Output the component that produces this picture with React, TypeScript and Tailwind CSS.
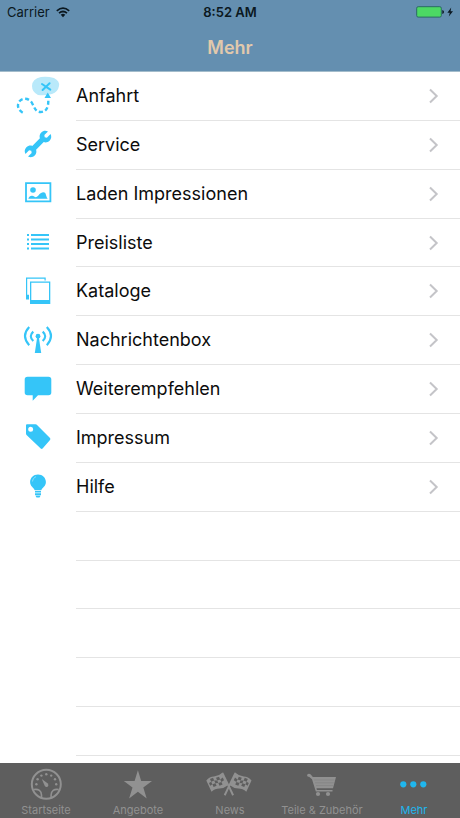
import type { ReactNode } from "react";

const menuItems = [
  {
    title: "Anfahrt",
    icon: (
      <>
        <path
          d="M27 5 Q33 4 40 6 Q46 9 45 14 Q44 20 38 22 Q31 24 24 23 Q18 20 18 14 Q18 7 27 5Z"
          fill="#b9e9fa"
        />
        <path
          d="M28 12 L36.3 17.6 M35.6 11.2 L28.6 18"
          stroke="currentColor"
          strokeWidth="2"
          fill="none"
          strokeLinecap="round"
        />
        <path d="M33.7 20.5 L37 26 H30.5Z" />
        <path
          d="M8.7 40.7 C4 38 2.5 33 5.5 29.3 C9 25.5 15 26 18 31 C20.5 35.5 21.5 40 26.7 40 C32 40 34.5 36 34.3 28"
          stroke="currentColor"
          strokeWidth="2.4"
          fill="none"
          strokeDasharray="4 2.6"
        />
      </>
    ),
  },
  {
    title: "Service",
    icon: (
      <g transform="rotate(45 24 23) translate(2.4 2.3) scale(0.9)">
        <path d="M22 5.3 V11 L24 12.5 L26 11 V5.3 C29 6.2 30.5 8.7 30.5 11.3 C30.5 14 29 16 27 17 V29 C29 30 30.5 32 30.5 34.7 C30.5 37.3 29 39.8 26 40.7 V35 L24 33.5 L22 35 V40.7 C19 39.8 17.5 37.3 17.5 34.7 C17.5 32 19 30 21 29 V17 C19 16 17.5 14 17.5 11.3 C17.5 8.7 19 6.2 22 5.3Z" />
      </g>
    ),
  },
  {
    title: "Laden Impressionen",
    icon: (
      <>
        <path
          d="M12 13.2 H36.4 V31.4 H12Z"
          fill="none"
          stroke="currentColor"
          strokeWidth="1.8"
        />
        <circle cx="19" cy="20" r="2.8" />
        <path d="M14.3 28.8 C15 26.5 17 25.3 19 26 C20.5 26.4 21 27.5 22.5 27 C24.5 26.3 26 22.3 29.3 22.3 C32.5 22.3 31.5 26 33.7 28.8Z" />
      </>
    ),
  },
  {
    title: "Preisliste",
    icon: (
      <path
        d="M13 16 H15 M17 16 H35 M13 20.5 H15 M17 20.5 H35 M13 25 H15 M17 25 H35 M13 29.5 H15 M17 29.5 H35"
        fill="none"
        stroke="currentColor"
        strokeWidth="1.9"
      />
    ),
  },
  {
    title: "Kataloge",
    icon: (
      <>
        <path d="M12 9.6 H31.7 V12.5 H30.5 V10.8 H13.2 V26.8 H15 V31.6 H12Z" />
        <path
          fillRule="evenodd"
          d="M16 13.4 H36.3 V36 H16Z M17.3 14.8 V32 H35 V14.8Z"
        />
      </>
    ),
  },
  {
    title: "Nachrichtenbox",
    icon: (
      <>
        <circle cx="24" cy="19.2" r="2.4" />
        <path d="M23.2 20 H24.8 L27.2 36 H20.8Z" />
        <path
          d="M19.3 14.6 Q14.3 19 19.3 24 M28.7 14.6 Q33.7 19 28.7 24 M15.2 10 Q6.8 19 15.2 28.2 M32.8 10 Q41.2 19 32.8 28.2"
          fill="none"
          stroke="currentColor"
          strokeWidth="2.1"
        />
      </>
    ),
  },
  {
    title: "Weiterempfehlen",
    icon: (
      <path d="M13.5 10.7 H34.5 Q37.3 10.7 37.3 13.5 V26.5 Q37.3 29.3 34.5 29.3 H24 L18.7 34.7 V29.3 H13.5 Q10.7 29.3 10.7 26.5 V13.5 Q10.7 10.7 13.5 10.7Z" />
    ),
  },
  {
    title: "Impressum",
    icon: (
      <path
        fillRule="evenodd"
        d="M13 10.3 H21.5 Q22.5 10.3 23.3 11.2 L36 24 Q36.8 25 36 26 L28.6 34.5 Q27.7 35.4 26.7 34.5 L12.8 21.3 Q12 20.4 12 19.5 V11.3 Q12 10.3 13 10.3Z M16.7 12.8 A2.5 2.5 0 1 0 16.7 17.8 A2.5 2.5 0 1 0 16.7 12.8Z"
      />
    ),
  },
  {
    title: "Hilfe",
    icon: (
      <>
        <path d="M24 11.4 C28.6 11.4 31.9 14.8 31.9 19 C31.9 23.5 28 24.7 27.2 27.3 H20.8 C20 24.7 16.1 23.5 16.1 19 C16.1 14.8 19.4 11.4 24 11.4Z" />
        <path
          d="M18.4 18.5 Q18.6 15 22 13.6"
          fill="none"
          stroke="#8adffb"
          strokeWidth="1"
        />
        <path d="M21 28 H27 V29.6 H21Z M21 30.3 H27 V31.9 H21Z M21.3 32.6 H26.7 L25.5 34.6 H22.5Z" />
      </>
    ),
  },
];

const emptyRows = [1, 2, 3, 4, 5];

const tabs = [
  {
    title: "Startseite",
    icon: (
      <>
        <circle
          cx="24.3"
          cy="18.3"
          r="14.5"
          fill="none"
          stroke="currentColor"
          strokeWidth="2"
        />
        <path
          d="M12 23.5 Q19 22.5 19.5 29 V31.5 M36.6 23.5 Q29.6 22.5 29.1 29 V31.5"
          fill="none"
          stroke="currentColor"
          strokeWidth="1.6"
        />
        <path d="M19.8 13 L25.8 17.5 Q27.2 19.4 25.6 20.7 Q23.8 21.5 22.7 19.7Z" />
        <circle cx="14.4" cy="18.3" r="1.2" />
        <circle cx="15.6" cy="13.3" r="1.2" />
        <circle cx="19.4" cy="9.6" r="1.2" />
        <circle cx="24.3" cy="8.3" r="1.2" />
        <circle cx="29.2" cy="9.6" r="1.2" />
        <circle cx="33" cy="13.3" r="1.2" />
        <circle cx="34.2" cy="18.3" r="1.2" />
      </>
    ),
  },
  {
    title: "Angebote",
    icon: (
      <path d="M23.9 4.3 L27.2 14.9 H38 L29.3 21.5 L32.7 32.5 L23.9 25.8 L15.1 32.5 L18.5 21.5 L9.8 14.9 H20.6Z" />
    ),
  },
  {
    title: "News",
    icon: (
      <>
        <Flag />
        <g transform="translate(45.8 0) scale(-1 1)">
          <Flag />
        </g>
      </>
    ),
  },
  {
    title: "Teile & Zubehör",
    icon: (
      <>
        <path d="M10.8 7.7 Q12.2 7.7 13 8.8 L14.8 11 H38 L35 22.3 H18.5 L18.9 24 H34.5 V25.4 H17.8 L14 13.2 L11.4 11 Q9 11 9 9.3 Q9.2 7.8 10.8 7.7Z" />
        <path
          d="M16 14 H36.5 M17 16.8 H35.8 M18 19.6 H35"
          stroke="#7c7c7c"
          strokeWidth="0.5"
        />
        <circle cx="20" cy="28" r="2.1" />
        <circle cx="30" cy="28" r="2.1" />
      </>
    ),
  },
  {
    title: "Mehr",
    active: true,
    icon: (
      <>
        <circle cx="13.3" cy="18.3" r="3.1" />
        <circle cx="23.3" cy="18.3" r="3.1" />
        <circle cx="33.3" cy="18.3" r="3.1" />
      </>
    ),
  },
];

function Flag() {
  return (
    <>
      <path d="M0.3 14.5 Q3.5 10.5 8 10.5 Q13 10 16.3 6.7 L22 19.3 Q18 22.5 13.5 22.5 Q9 22.5 5.5 25.8Z" />
      <path d="M15.6 7 L17.2 6.4 L28 28.8 L26.2 29.8Z" />
      <path
        d="M4 13 L7 11.8 L8.2 14.4 L5.2 15.7Z M10 11.8 L13 10.8 L14.2 13.4 L11.2 14.4Z M8.2 14.4 L11.2 14.4 L12.3 17 L9.4 17.2Z M14.2 13.4 L16.8 11.6 L18 14.2 L15.4 16Z M3 17 L5.2 15.7 L6.4 18.3 L4.2 19.7Z M6.4 18.3 L9.4 17.2 L10.6 19.8 L7.6 21Z M12.3 17 L15.4 16 L16.6 18.6 L13.5 19.7Z"
        fill="#5e5e5e"
      />
    </>
  );
}

function MenuIcon({ children }: { children: ReactNode }) {
  return (
    <svg
      viewBox="0 0 48 48"
      className="size-12 text-[#35c5f8]"
      fill="currentColor"
      aria-hidden="true"
    >
      {children}
    </svg>
  );
}

function StatusBar() {
  return (
    <div className="grid h-6 grid-cols-3 items-center px-[7px] text-[13px] leading-4 text-[#0b1820]">
      <div className="flex items-center gap-1.5">
        <span>Carrier</span>
        <svg viewBox="0 0 14 11" className="h-[11px] w-3.5" aria-hidden="true">
          <path
            d="M0.8 3.8 Q7 -1.6 13.2 3.8 M3 6.2 Q7 2.8 11 6.2"
            fill="none"
            stroke="currentColor"
            strokeWidth="1.7"
          />
          <path d="M4.7 7.7 Q7 6 9.3 7.7 L7 10.2Z" fill="currentColor" />
        </svg>
      </div>
      <span className="text-center font-semibold">8:52 AM</span>
      <svg
        viewBox="0 0 38 12"
        className="h-3 w-[38px] justify-self-end"
        aria-hidden="true"
      >
        <rect
          x="1.7"
          y="0.7"
          width="24.6"
          height="10.4"
          rx="1.5"
          fill="#4cd964"
          stroke="#2b6a63"
          strokeWidth="1"
        />
        <path d="M27.3 4 Q29 4.5 29 6 Q29 7.5 27.3 8Z" fill="#0b1820" />
        <path d="M36.2 1.6 L32.4 6.8 H34.8 L33.8 10.6 L38 5.2 H35.6Z" fill="#0b1820" />
      </svg>
    </div>
  );
}

export default function App() {
  return (
    <div className="flex min-h-screen flex-col bg-white font-['Inter','Liberation_Sans',sans-serif]">
      <header className="border-b border-[#a3bccb] bg-[#648fb0]">
        <StatusBar />
        <h1 className="flex h-[47px] items-center justify-center text-lg font-semibold text-[#e2c9ac]">
          Mehr
        </h1>
      </header>

      <main className="flex flex-1 flex-col pb-[7px]">
        <ul className="flex flex-1 flex-col">
          {menuItems.map((item) => (
            <li key={item.title} className="flex min-h-12 flex-1 basis-0">
              <a href="#" className="flex w-full items-center">
                <span className="flex w-[76px] shrink-0 justify-center">
                  <MenuIcon>{item.icon}</MenuIcon>
                </span>
                <span className="flex flex-1 items-center justify-between self-stretch border-b border-[#e4e4e4] pr-5 text-lg text-[#0c0c0c]">
                  {item.title}
                  <svg
                    viewBox="0 0 12 16"
                    className="h-4 w-3"
                    fill="none"
                    stroke="#c4c4c8"
                    strokeWidth="2"
                    aria-hidden="true"
                  >
                    <path d="M2 1.5 L8.7 8 L2 14.5" />
                  </svg>
                </span>
              </a>
            </li>
          ))}
          {emptyRows.map((row) => (
            <li key={row} className="flex min-h-12 flex-1 basis-0 pl-[76px]">
              <div className="flex-1 border-b border-[#e4e4e4]" />
            </li>
          ))}
        </ul>
      </main>

      <nav className="grid grid-cols-5 bg-[#5e5e5e] pt-[3px]">
        {tabs.map((tab) => (
          <a
            key={tab.title}
            href="#"
            className={`flex flex-col items-center text-[11px] leading-4 ${
              tab.active ? "text-[#1fb6ee]" : "text-[#919191]"
            }`}
          >
            <svg
              viewBox="0 0 48 36"
              className="h-9 w-12"
              fill="currentColor"
              aria-hidden="true"
            >
              {tab.icon}
            </svg>
            <span className="whitespace-nowrap">{tab.title}</span>
          </a>
        ))}
      </nav>
    </div>
  );
}
